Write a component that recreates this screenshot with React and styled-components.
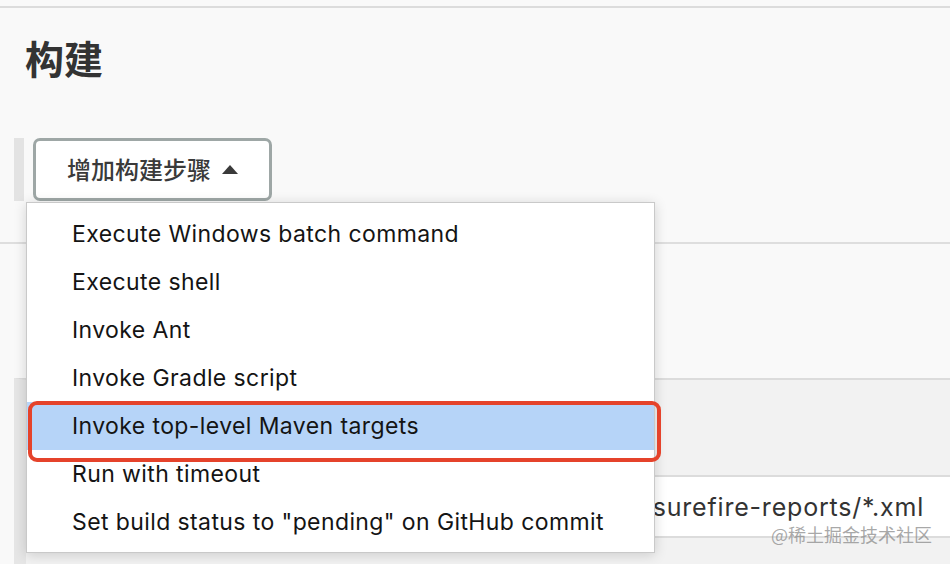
import React from "react";
import styled, { createGlobalStyle } from "styled-components";

const Global = createGlobalStyle`
  html, body { margin: 0; padding: 0; background: #f9f9f9; }
  body { font-family: Inter, "Noto Sans CJK SC", sans-serif; overflow: hidden; }
`;

const Page = styled.div`
  position: relative;
  width: 950px;
  height: 564px;
  overflow: hidden;
  background: #f9f9f9;
  display: flex;
  flex-direction: column;
`;

const TopRule = styled.div`
  height: 6px;
  flex: none;
  border-bottom: 2px solid #dcdcdc;
`;

const Title = styled.h2`
  margin: 29px 0 0 25px;
  font-family: "Noto Sans CJK SC", sans-serif;
  font-size: 39px;
  line-height: 40px;
  font-weight: 700;
  color: #333;
`;

const StepRow = styled.div`
  margin-top: 61px;
  display: flex;
  align-items: stretch;
  gap: 9px;
  padding-left: 14px;
  height: 63px;
  flex: none;
`;

const LeftStrip = styled.div`
  width: 10px;
  background: #e3e3e3;
`;

const AddButton = styled.button`
  box-sizing: border-box;
  width: 239px;
  height: 63px;
  border: 3px solid #9ea7a6;
  border-radius: 7px;
  background: #fff;
  display: flex;
  align-items: center;
  justify-content: center;
  gap: 11px;
  padding: 0 0 2px 0;
  font-family: "Noto Sans CJK SC", sans-serif;
  font-size: 24px;
  font-weight: 500;
  color: #3a3a3a;
`;

const Caret = styled.span`
  width: 0;
  height: 0;
  border-left: 8px solid transparent;
  border-right: 8px solid transparent;
  border-bottom: 9px solid #3a3a3a;
  margin-top: 1px;
`;

const Divider = styled.div`
  margin-top: 41px;
  height: 0;
  border-top: 2px solid #dedede;
  flex: none;
`;

const Panel = styled.div`
  margin-top: 134px;
  margin-left: 14px;
  border-left: 12px solid #e6e6e6;
  border-top: 2px solid #dcdcdc;
  background: #f2f2f2;
  flex: 1;
  display: flex;
  flex-direction: column;
`;

const PanelHead = styled.div`
  height: 95px;
  flex: none;
  border-bottom: 2px solid #dcdcdc;
`;

const Field = styled.div`
  height: 59px;
  flex: none;
  background: #fff;
  border-bottom: 2px solid #dcdcdc;
  display: flex;
  align-items: center;
  justify-content: flex-end;
  padding-right: 26px;
  font-size: 25px;
  letter-spacing: 0.8px;
  color: #333;
  white-space: nowrap;
  overflow: hidden;
`;

const Menu = styled.ul`
  position: absolute;
  left: 26px;
  top: 202px;
  width: 629px;
  box-sizing: border-box;
  margin: 0;
  padding: 7px 0 6px;
  list-style: none;
  background: #fff;
  border: 1px solid #c9c9c9;
  box-shadow: 0 2px 12px rgba(0, 0, 0, 0.16);
`;

const Item = styled.li`
  position: relative;
  height: 48px;
  display: flex;
  align-items: center;
  padding-left: 45px;
  font-size: 23px;
  letter-spacing: 0.4px;
  color: #141414;
  background: ${(p) => (p.$active ? "#b6d4f8" : "transparent")};
`;

const Highlight = styled.span`
  position: absolute;
  left: 1px;
  top: -1px;
  width: 633px;
  height: 61px;
  box-sizing: border-box;
  border: 4px solid #e5432b;
  border-radius: 9px;
  pointer-events: none;
`;

const Watermark = styled.span`
  position: absolute;
  right: 18px;
  bottom: 17px;
  font-family: "Noto Sans CJK SC", sans-serif;
  font-size: 18px;
  color: rgba(140, 140, 140, 0.75);
`;

const items = [
  "Execute Windows batch command",
  "Execute shell",
  "Invoke Ant",
  "Invoke Gradle script",
  "Invoke top-level Maven targets",
  "Run with timeout",
  'Set build status to "pending" on GitHub commit',
];

export default function App() {
  return (
    <>
      <Global />
      <Page>
        <TopRule />
        <Title>构建</Title>
        <StepRow>
          <LeftStrip />
          <AddButton>
            增加构建步骤
            <Caret />
          </AddButton>
        </StepRow>
        <Divider />
        <Panel>
          <PanelHead />
          <Field>**/target/surefire-reports/*.xml</Field>
        </Panel>
        <Menu>
          {items.map((t, i) => (
            <Item key={t} $active={i === 4}>
              {t}
              {i === 4 && <Highlight />}
            </Item>
          ))}
        </Menu>
        <Watermark>@稀土掘金技术社区</Watermark>
      </Page>
    </>
  );
}
